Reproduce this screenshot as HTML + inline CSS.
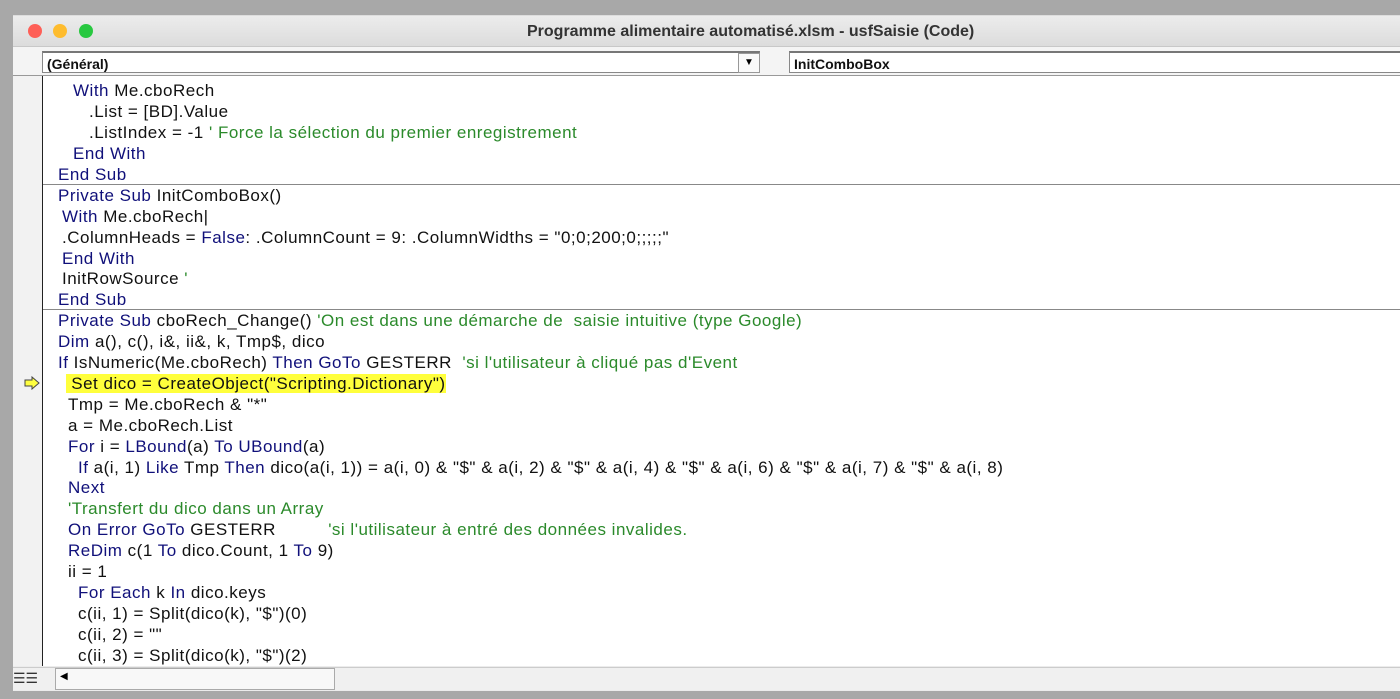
<!DOCTYPE html>
<html><head><meta charset="utf-8"><style>
body{margin:0;width:1400px;height:699px;background:#a8a8a8;position:relative;overflow:hidden;font-family:"Liberation Sans",sans-serif}
.win{position:absolute;left:13px;top:15px;width:1400px;height:675px;background:#ececec;border-top:1px solid #ddd}
.title{position:absolute;left:0;top:0;right:0;height:30px;background:linear-gradient(#ececec,#dcdcdc);border-bottom:1px solid #c8c8c8}
.title .t{position:absolute;left:514px;top:7px;font-size:16px;font-weight:bold;color:#333}
.dot{position:absolute;top:8px;width:14px;height:14px;border-radius:50%}
.hdr{position:absolute;left:0;right:0;top:31px;height:28px;background:#f4f4f4;border-bottom:1px solid #999}
.cb{position:absolute;top:4px;height:22px;background:#fff;border:1px solid #888;border-top:2px solid #777;box-sizing:border-box;font-size:14px;font-weight:bold;padding:3px 4px;color:#111}
.code{position:absolute;left:29px;top:60px;right:0;height:590px;background:#fff;border-left:1px solid #222}
.gut{position:absolute;left:0;top:60px;width:29px;height:590px;background:#f2f2f2}
.l{position:absolute;white-space:pre;font-size:17px;letter-spacing:0.5px;color:#111;line-height:20px}
.k{color:#10107a}.c{color:#2b8a2b}
.sep{position:absolute;left:30px;right:0;height:1px;background:#888}
.hl{background:#ffff3c}
.sb{position:absolute;top:651px;height:22px;left:0;right:0;background:#f0f0f0;border-top:1px solid #ccc}
</style></head><body>
<div class="win">
<div class="title">
<div class="dot" style="left:15px;background:#fe5f57"></div>
<div class="dot" style="left:40px;background:#febc2e"></div>
<div class="dot" style="left:66px;background:#28c840"></div>
<div class="t">Programme alimentaire automatisé.xlsm - usfSaisie (Code)</div>
</div>
<div class="hdr">
<div class="cb" style="left:29px;width:718px">(Général)</div>
<div style="position:absolute;left:725px;top:6px;width:20px;height:18px;background:#fafafa;border:1px solid #999;font-size:10px;text-align:center;line-height:18px">▼</div>
<div class="cb" style="left:776px;width:640px">InitComboBox</div>
</div>
<div class="gut"></div>
<div class="code"></div>
<div class="sb">
<div style="position:absolute;left:0;top:2px;font-size:14px;color:#333">☰☰</div>
<div style="position:absolute;left:42px;top:0;width:278px;height:20px;border:1px solid #aaa;background:#f8f8f8"></div>
<div style="position:absolute;left:47px;top:3px;font-size:10px">◀</div>
</div>
</div>
<div class="sep" style="top:184px;left:43px"></div>
<div class="sep" style="top:309px;left:43px"></div>
<svg style="position:absolute;left:24px;top:376px" width="16" height="14" viewBox="0 0 16 14"><path d="M1 4h7V1l7 6-7 6v-3H1z" fill="#ffff40" stroke="#444" stroke-width="1"/></svg>

<div class="l" style="left:73px;top:81px"><span class="k">With</span> Me.cboRech</div>
<div class="l" style="left:89px;top:102px">.List = [BD].Value</div>
<div class="l" style="left:89px;top:123px">.ListIndex = -1 <span class="c">' Force la sélection du premier enregistrement</span></div>
<div class="l" style="left:73px;top:144px"><span class="k">End With</span></div>
<div class="l" style="left:58px;top:165px"><span class="k">End Sub</span></div>
<div class="l" style="left:58px;top:186px"><span class="k">Private Sub</span> InitComboBox()</div>
<div class="l" style="left:62px;top:207px"><span class="k">With</span> Me.cboRech|</div>
<div class="l" style="left:62px;top:228px">.ColumnHeads = <span class="k">False</span>: .ColumnCount = 9: .ColumnWidths = "0;0;200;0;;;;;"</div>
<div class="l" style="left:62px;top:249px"><span class="k">End With</span></div>
<div class="l" style="left:62px;top:269px">InitRowSource <span class="c">'</span></div>
<div class="l" style="left:58px;top:290px"><span class="k">End Sub</span></div>
<div class="l" style="left:58px;top:311px"><span class="k">Private Sub</span> cboRech_Change() <span class="c">'On est dans une démarche de  saisie intuitive (type Google)</span></div>
<div class="l" style="left:58px;top:332px"><span class="k">Dim</span> a(), c(), i&amp;, ii&amp;, k, Tmp$, dico</div>
<div class="l" style="left:58px;top:353px"><span class="k">If</span> IsNumeric(Me.cboRech) <span class="k">Then GoTo</span> GESTERR  <span class="c">'si l'utilisateur à cliqué pas d'Event</span></div>
<div class="l" style="left:66px;top:374px"><span class="hl"> <span class="k" style="color:#111">Set</span> dico = CreateObject("Scripting.Dictionary")</span></div>
<div class="l" style="left:68px;top:395px">Tmp = Me.cboRech &amp; "*"</div>
<div class="l" style="left:68px;top:416px">a = Me.cboRech.List</div>
<div class="l" style="left:68px;top:437px"><span class="k">For</span> i = <span class="k">LBound</span>(a) <span class="k">To</span> <span class="k">UBound</span>(a)</div>
<div class="l" style="left:78px;top:458px"><span class="k">If</span> a(i, 1) <span class="k">Like</span> Tmp <span class="k">Then</span> dico(a(i, 1)) = a(i, 0) &amp; "$" &amp; a(i, 2) &amp; "$" &amp; a(i, 4) &amp; "$" &amp; a(i, 6) &amp; "$" &amp; a(i, 7) &amp; "$" &amp; a(i, 8)</div>
<div class="l" style="left:68px;top:478px"><span class="k">Next</span></div>
<div class="l" style="left:68px;top:499px"><span class="c">'Transfert du dico dans un Array</span></div>
<div class="l" style="left:68px;top:520px"><span class="k">On Error GoTo</span> GESTERR          <span class="c">'si l'utilisateur à entré des données invalides.</span></div>
<div class="l" style="left:68px;top:541px"><span class="k">ReDim</span> c(1 <span class="k">To</span> dico.Count, 1 <span class="k">To</span> 9)</div>
<div class="l" style="left:68px;top:562px">ii = 1</div>
<div class="l" style="left:78px;top:583px"><span class="k">For Each</span> k <span class="k">In</span> dico.keys</div>
<div class="l" style="left:78px;top:604px">c(ii, 1) = Split(dico(k), "$")(0)</div>
<div class="l" style="left:78px;top:625px">c(ii, 2) = ""</div>
<div class="l" style="left:78px;top:646px">c(ii, 3) = Split(dico(k), "$")(2)</div>
</body></html>
